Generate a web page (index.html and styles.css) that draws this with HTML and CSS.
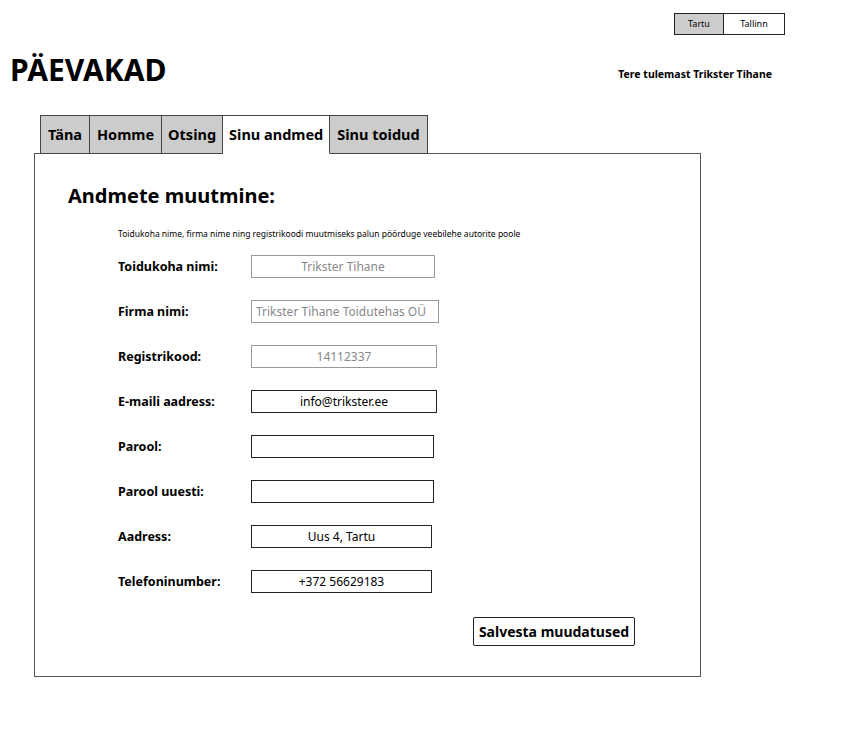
FILE: index.html
```html
<!DOCTYPE html>
<html lang="et">
<head>
<meta charset="utf-8">
<title>Päevakad</title>
<link rel="stylesheet" href="styles.css">
</head>
<body>
<div class="topbar">
  <div class="city">
    <span class="city-btn active">Tartu</span>
    <span class="city-btn">Tallinn</span>
  </div>
</div>
<header class="header">
  <h1 class="logo">PÄEVAKAD</h1>
  <div class="welcome">Tere tulemast Trikster Tihane</div>
</header>
<nav class="tabs">
  <span class="tab">Täna</span>
  <span class="tab">Homme</span>
  <span class="tab">Otsing</span>
  <span class="tab active">Sinu andmed</span>
  <span class="tab">Sinu toidud</span>
</nav>
<main class="panel">
  <h2 class="heading">Andmete muutmine:</h2>
  <p class="note">Toidukoha nime, firma nime ning registrikoodi muutmiseks palun pöörduge veebilehe autorite poole</p>
  <div class="form">
    <label class="label">Toidukoha nimi:</label>
    <div class="field disabled w184">Trikster Tihane</div>
    <label class="label">Firma nimi:</label>
    <div class="field disabled w188 left">Trikster Tihane Toidutehas OÜ</div>
    <label class="label">Registrikood:</label>
    <div class="field disabled w186">14112337</div>
    <label class="label">E-maili aadress:</label>
    <div class="field w186">info@trikster.ee</div>
    <label class="label">Parool:</label>
    <div class="field w183"></div>
    <label class="label">Parool uuesti:</label>
    <div class="field w183"></div>
    <label class="label">Aadress:</label>
    <div class="field w181">Uus 4, Tartu</div>
    <label class="label">Telefoninumber:</label>
    <div class="field w181">+372 56629183</div>
  </div>
  <div class="actions">
    <button class="save">Salvesta muudatused</button>
  </div>
</main>
</body>
</html>
```
FILE: styles.css
```css
* { box-sizing: border-box; }
body {
  margin: 0;
  font-family: "Noto Sans", "Open Sans", sans-serif;
  color: #000;
  background: #fff;
  width: 863px;
  height: 731px;
  overflow: hidden;
}
.topbar {
  display: flex;
  justify-content: flex-end;
  padding: 13px 78px 0 0;
}
.city {
  display: flex;
  border: 1px solid #222;
  height: 22px;
}
.city-btn {
  font-size: 9px;
  line-height: 20px;
  text-align: center;
  width: 60px;
}
.city-btn.active {
  width: 49px;
  background: #cccccc;
  border-right: 1px solid #222;
}
.header {
  display: flex;
  align-items: center;
  justify-content: space-between;
  padding: 0 91px 0 10px;
  margin-top: 13px;
  height: 42px;
}
.logo {
  margin: 0;
  font-size: 30px;
  font-weight: 700;
  letter-spacing: 0;
}
.welcome {
  font-size: 10.5px;
  font-weight: 700;
  margin-top: 9px;
}
.tabs {
  display: flex;
  margin: 25px 0 0 40px;
  position: relative;
  z-index: 1;
  margin-bottom: -1px;
}
.tab {
  font-size: 14.5px;
  font-weight: 700;
  height: 39px;
  line-height: 36px;
  padding: 0 7px;
  background: #cccccc;
  border: 1px solid #444;
  border-left: none;
}
.tab:first-child { border-left: 1px solid #444; }
.tab.active {
  background: #fff;
  border-bottom-color: #fff;
  padding: 0 6px;
}
.tab:nth-child(3) { padding: 0 6px; }
.panel {
  margin-left: 34px;
  width: 667px;
  height: 524px;
  border: 1px solid #555;
  padding: 28px 0 0 33px;
}
.heading {
  margin: 0;
  font-size: 20px;
  font-weight: 700;
}
.note {
  margin: 19px 0 0 50px;
  font-size: 8.5px;
}
.form {
  display: grid;
  grid-template-columns: 133px auto;
  row-gap: 22px;
  margin: 16px 0 0 50px;
  align-items: center;
  justify-items: start;
}
.label {
  font-size: 12.5px;
  font-weight: 700;
}
.field {
  height: 23px;
  border: 1px solid #222;
  font-size: 12px;
  line-height: 21px;
  text-align: center;
  color: #000;
}
.field.disabled {
  border-color: #999;
  color: #888;
}
.field.left { text-align: left; padding-left: 4px; }
.w181 { width: 181px; }
.w183 { width: 183px; }
.w184 { width: 184px; }
.w186 { width: 186px; }
.w188 { width: 188px; }
.actions {
  display: flex;
  justify-content: flex-end;
  padding-right: 65px;
  margin-top: 24px;
}
.save {
  font-family: inherit;
  font-size: 14px;
  font-weight: 700;
  height: 29px;
  width: 162px;
  background: #fff;
  border: 1px solid #222;
  border-radius: 2px;
  padding: 0;
}
```
